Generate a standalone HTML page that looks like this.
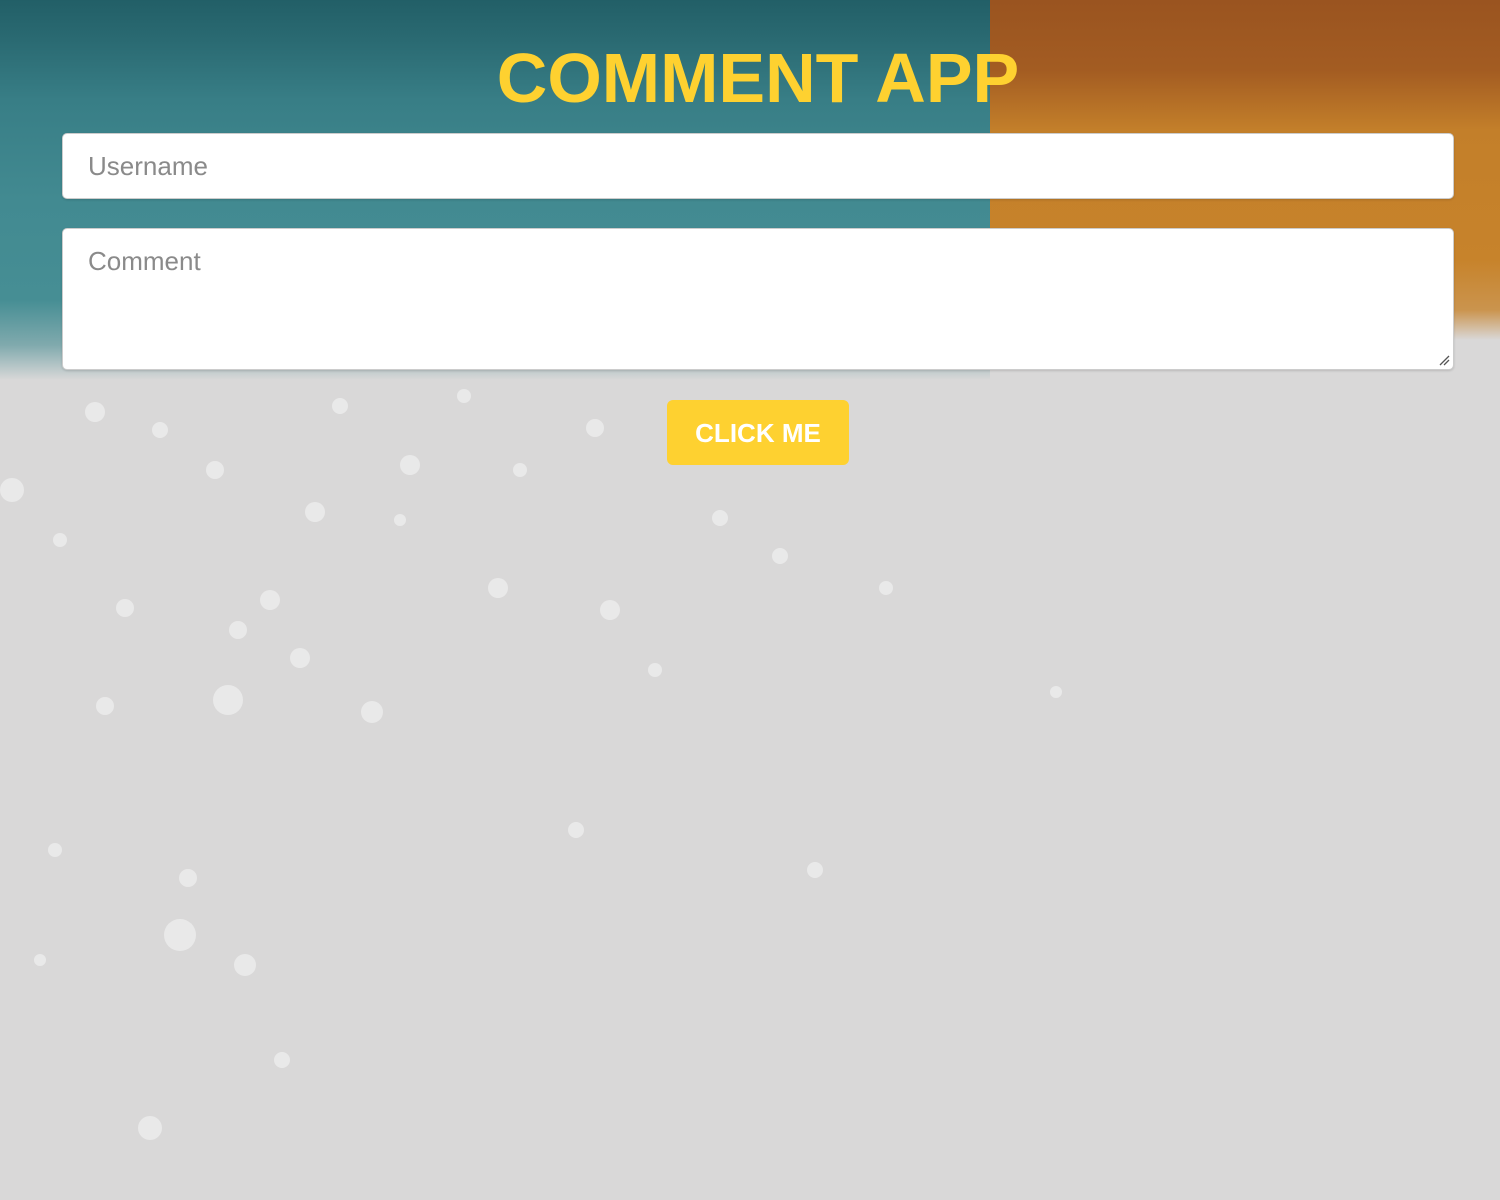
<!DOCTYPE html>
<html><head><style>
html,body{margin:0;padding:0;width:1500px;height:1200px;overflow:hidden;font-family:"Liberation Sans",Arial,sans-serif;}
body{position:relative;background:#d9d8d8;}
.teal{position:absolute;left:0;top:0;width:990px;height:380px;background:linear-gradient(180deg,#225f67 0px,#2a6a72 40px,#387e86 100px,#428a91 200px,#468e94 300px,rgba(90,150,155,0.7) 345px,rgba(217,216,216,0) 380px);}
.orange{position:absolute;left:990px;top:0;width:510px;height:340px;background:linear-gradient(180deg,#9a5420 0px,#a35c22 70px,#c37f2a 130px,#c7832b 260px,rgba(199,131,43,0.8) 310px,rgba(217,216,216,0) 340px);}
h1{position:absolute;left:0;right:0;top:38px;margin:0;text-align:center;font-size:70px;font-weight:bold;color:#fed130;padding-left:16px;}
.box{position:absolute;left:62px;width:1392px;background:#fff;border:1px solid #ccc;border-radius:5px;box-shadow:0 1px 2px rgba(0,0,0,.15);box-sizing:border-box;color:#8a8a8a;font-size:26px;padding-left:25px;}
.u{top:133px;height:66px;line-height:64px;}
.c{top:228px;height:142px;padding-top:17px;line-height:30px;}
.btn{position:absolute;left:667px;top:400px;width:182px;height:65px;background:#fed130;border-radius:6px;color:#fff;font-weight:bold;font-size:26px;text-align:center;line-height:66px;}
svg.sp{position:absolute;left:0;top:0;}
</style></head><body>
<div class="teal"></div><div class="orange"></div>
<svg class="sp" width="1500" height="1200" fill="#eeeeee" opacity="0.8">
<circle cx="12" cy="490" r="12"/><circle cx="95" cy="412" r="10"/><circle cx="228" cy="700" r="15"/><circle cx="180" cy="935" r="16"/><circle cx="245" cy="965" r="11"/><circle cx="372" cy="712" r="11"/><circle cx="270" cy="600" r="10"/><circle cx="300" cy="658" r="10"/><circle cx="150" cy="1128" r="12"/><circle cx="498" cy="588" r="10"/><circle cx="610" cy="610" r="10"/><circle cx="238" cy="630" r="9"/><circle cx="410" cy="465" r="10"/><circle cx="595" cy="428" r="9"/><circle cx="125" cy="608" r="9"/><circle cx="105" cy="706" r="9"/><circle cx="315" cy="512" r="10"/><circle cx="215" cy="470" r="9"/><circle cx="720" cy="518" r="8"/><circle cx="780" cy="556" r="8"/><circle cx="886" cy="588" r="7"/><circle cx="576" cy="830" r="8"/><circle cx="815" cy="870" r="8"/><circle cx="188" cy="878" r="9"/><circle cx="282" cy="1060" r="8"/><circle cx="55" cy="850" r="7"/><circle cx="40" cy="960" r="6"/><circle cx="1056" cy="692" r="6"/><circle cx="464" cy="396" r="7"/><circle cx="340" cy="406" r="8"/><circle cx="160" cy="430" r="8"/><circle cx="60" cy="540" r="7"/><circle cx="400" cy="520" r="6"/><circle cx="520" cy="470" r="7"/><circle cx="655" cy="670" r="7"/>
</svg>
<h1>COMMENT APP</h1>
<div class="box u">Username</div>
<div class="box c">Comment
<svg style="position:absolute;right:3px;bottom:3px" width="12" height="12"><path d="M2 11L11 2M6 11L11 6" stroke="#555" stroke-width="1.3"/></svg></div>
<div class="btn">CLICK ME</div>
</body></html>
